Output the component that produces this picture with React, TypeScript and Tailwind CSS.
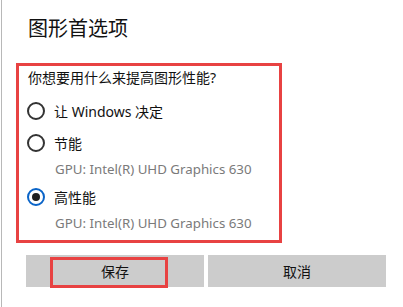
import React from "react";

const font = '"Segoe UI", "Noto Sans", "Noto Sans CJK SC", sans-serif';

function Radio({ checked }: { checked?: boolean }) {
  return checked ? (
    <span className="flex h-[18px] w-[18px] shrink-0 items-center justify-center rounded-full border-2 border-[#0a64c8]">
      <span className="h-[8px] w-[8px] rounded-full bg-[#1f1f1f]" />
    </span>
  ) : (
    <span className="h-[18px] w-[18px] shrink-0 rounded-full border-2 border-[#333333]" />
  );
}

export default function App() {
  return (
    <div className="relative h-[307px] w-[403px] overflow-hidden bg-white" style={{ fontFamily: font }}>
      <div className="ml-px h-full border-l border-[#b8b8b8]">
        <div className="pl-[26px] pt-[15px] text-[20px] leading-[28px] text-[#111]">图形首选项</div>
        <div className="ml-[14px] mt-[20px] h-[180px] w-[266px] border-[3px] border-[#e84242] pl-[8px] pt-[2px]">
          <div className="pl-[1px] text-[14px] leading-[20px] text-[#111]">你想要用什么来提高图形性能?</div>
          <div className="mt-[11px] flex h-[24px] items-center gap-[9px]">
            <Radio />
            <span className="text-[14px] text-[#111]">让 Windows 决定</span>
          </div>
          <div className="mt-[8px] flex h-[24px] items-center gap-[9px]">
            <Radio />
            <span className="text-[14px] text-[#111]">节能</span>
          </div>
          <div className="mt-[4px] h-[20px] pl-[28px] text-[13.3px] leading-[20px] text-[#7a7a7a]">GPU: Intel(R) UHD Graphics 630</div>
          <div className="mt-[6px] flex h-[24px] items-center gap-[9px]">
            <Radio checked />
            <span className="text-[14px] text-[#111]">高性能</span>
          </div>
          <div className="mt-[4px] h-[20px] pl-[28px] text-[13.3px] leading-[20px] text-[#7a7a7a]">GPU: Intel(R) UHD Graphics 630</div>
        </div>
        <div className="relative ml-[24px] mt-[12px] grid w-[360px] grid-cols-2 gap-[4px]">
          <button className="h-[32px] bg-[#cccccc] text-[14px] text-[#111]">保存</button>
          <button className="h-[32px] bg-[#cccccc] text-[14px] text-[#111]">取消</button>
          <div className="pointer-events-none absolute left-[24px] top-[2px] h-[31px] w-[118px] border-[3px] border-[#e84242]" />
        </div>
      </div>
    </div>
  );
}
